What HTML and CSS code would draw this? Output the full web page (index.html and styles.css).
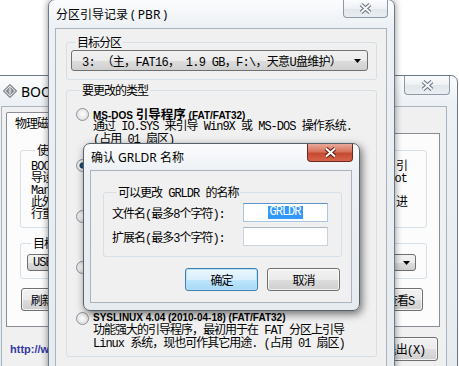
FILE: index.html
```html
<!DOCTYPE html>
<html lang="zh-CN">
<head>
    <meta charset="UTF-8">
    <meta name="viewport" content="width=device-width, initial-scale=1.0">
    <title>BOOTICE - 分区引导记录</title>
    <link rel="stylesheet" href="styles.css">
</head>
<body>
<div class="desktop">

    <!-- 主窗口 BOOTICE (在后面) -->
    <div class="win boot">
        <div class="titlebar">
            <svg class="app-icon" width="14" height="14" viewBox="0 0 14 14">
                <path d="M7 0.5L13.5 7L7 13.5L0.5 7Z" fill="#d9dcdf" stroke="#4a4f55"/>
                <path d="M3.5 7L7 3.5L10.5 7L7 10.5Z" fill="#9aa1a8" stroke="#5d646b"/>
                <path d="M7 3.5L7 10.5" stroke="#f2f2f2"/>
            </svg>
            <span class="caption">BOOTICE</span>
            <div class="close">
                <svg width="13" height="11" viewBox="0 0 13 11"><path d="M2 1.5l9 8M11 1.5l-9 8" stroke="#66717d" stroke-width="4"/><path d="M2 1.5l9 8M11 1.5l-9 8" stroke="#f5f7f9" stroke-width="2"/></svg>
            </div>
        </div>
        <div class="client">
            <div class="tabs">
                <div class="tab song">物理磁盘</div>
            </div>
            <div class="tab-panel">
                <fieldset class="group usage song">
                    <legend>使用说明</legend>
                    <div class="line"><span>BOOTICE</span><span>引</span></div>
                    <div class="line"><span>导设置</span><span>Boot</span></div>
                    <div class="line"><span>Manage</span><span></span></div>
                    <div class="line"><span>此外</span><span>进</span></div>
                    <div class="line"><span>行重建</span><span></span></div>
                </fieldset>
                <fieldset class="group target song">
                    <legend>目标磁盘</legend>
                    <div class="combo small-combo">
                        <span>USB HDD</span>
                        <svg width="7" height="4" viewBox="0 0 7 4"><path d="M0 0H7L3.5 4Z"/></svg>
                    </div>
                </fieldset>
                <div class="btn-row">
                    <button class="btn song refresh">刷新(F)</button>
                    <button class="btn song look">查看S</button>
                </div>
            </div>
            <div class="footer">
                <a class="link" href="#">http://www</a>
                <button class="btn song exit">退出(X)</button>
            </div>
        </div>
    </div>

    <!-- 分区引导记录对话框 -->
    <div class="win pbr">
        <div class="titlebar">
            <span class="caption">分区引导记录 ( PBR )</span>
            <div class="close">
                <svg width="13" height="11" viewBox="0 0 13 11"><path d="M2 1.5l9 8M11 1.5l-9 8" stroke="#66717d" stroke-width="4"/><path d="M2 1.5l9 8M11 1.5l-9 8" stroke="#f5f7f9" stroke-width="2"/></svg>
            </div>
        </div>
        <div class="client">
            <fieldset class="group part song">
                <legend>目标分区</legend>
                <div class="combo">
                    <span class="combo-text">3: （主，FAT16， 1.9 GB，F:\，天意U盘维护）</span>
                    <svg width="7" height="4" viewBox="0 0 7 4"><path d="M0 0H7L3.5 4Z"/></svg>
                </div>
            </fieldset>
            <fieldset class="group kind">
                <legend class="song">要更改的类型</legend>
                <div class="opts">
                    <div class="opt">
                        <span class="radio"></span>
                        <div class="opt-text">
                            <div class="opt-title">MS-DOS <span class="cjk">引导程序</span> (FAT/FAT32)</div>
                            <div class="song">通过 IO.SYS 来引导 Win9X 或 MS-DOS 操作系统.</div>
                            <div class="song">(占用 01 扇区)</div>
                        </div>
                    </div>
                    <div class="opt">
                        <span class="radio on"></span>
                        <div class="opt-text"><div class="opt-title"></div><div></div><div></div></div>
                    </div>
                    <div class="opt">
                        <span class="radio"></span>
                        <div class="opt-text"><div class="opt-title"></div><div></div><div></div></div>
                    </div>
                    <div class="opt">
                        <span class="radio"></span>
                        <div class="opt-text"><div class="opt-title"></div><div></div><div></div></div>
                    </div>
                    <div class="opt">
                        <span class="radio"></span>
                        <div class="opt-text">
                            <div class="opt-title">SYSLINUX 4.04 (2010-04-18) (FAT/FAT32)</div>
                            <div class="song">功能强大的引导程序，最初用于在 FAT 分区上引导</div>
                            <div class="song">Linux 系统，现也可作其它用途. (占用 01 扇区)</div>
                        </div>
                    </div>
                </div>
            </fieldset>
        </div>
    </div>

    <!-- 确认 GRLDR 名称 (当前活动窗口) -->
    <div class="win modal">
        <div class="titlebar">
            <span class="caption">确认 GRLDR 名称</span>
            <div class="close red">
                <svg width="13" height="11" viewBox="0 0 13 11"><path d="M2 1.5l9 8M11 1.5l-9 8" stroke="#5c1a10" stroke-width="4"/><path d="M2 1.5l9 8M11 1.5l-9 8" stroke="#ffffff" stroke-width="2"/></svg>
            </div>
        </div>
        <div class="client">
            <fieldset class="group names song">
                <legend>可以更改 GRLDR 的名称</legend>
                <div class="field">
                    <label>文件名(最多8个字符):</label>
                    <div class="input focus"><span class="sel">GRLDR</span></div>
                </div>
                <div class="field">
                    <label>扩展名(最多3个字符):</label>
                    <div class="input"></div>
                </div>
            </fieldset>
            <div class="dlg-buttons">
                <button class="btn song default">确定</button>
                <button class="btn song">取消</button>
            </div>
        </div>
    </div>

</div>
</body>
</html>
```

FILE: styles.css
```css
* {
    box-sizing: border-box;
}
body {
    margin: 0;
    background: #fff;
    font-family: "Noto Sans", "Noto Sans CJK SC", sans-serif;
    font-size: 12px;
    color: #000;
}
.desktop {
    position: relative;
    width: 459px;
    height: 366px;
    overflow: hidden;
}

/* 宋体风格文字 */
.song {
    font-family: "Liberation Mono", "Noto Sans CJK SC", monospace;
    font-size: 12px;
    letter-spacing: -1px;
    white-space: nowrap;
}

/* 窗口框架 */
.win {
    position: absolute;
    display: flex;
    flex-direction: column;
    border: 1px solid #6c7986;
    border-radius: 7px 7px 0 0;
    background: linear-gradient(#fbfcfd, #edf1f5 26px, #e6ebf0);
}
.titlebar {
    display: flex;
    align-items: center;
    flex: none;
}
.caption {
    white-space: nowrap;
}
.close {
    margin-left: auto;
    align-self: flex-start;
    display: flex;
    align-items: center;
    justify-content: center;
    border: 1px solid #8d99a6;
    border-top: none;
    border-radius: 0 0 4px 4px;
    background: linear-gradient(#fbfcfd, #eef1f4 50%, #e1e6eb 51%, #eaeef2);
}
.close svg {
    display: block;
}
.close.red {
    border-color: #6e2a20;
    background: linear-gradient(#e9a99b, #d7725c 45%, #c44a31 55%, #d5644a);
}
.client {
    flex: 1;
    background: #f0f0f0;
    border: 1px solid #a9b3bd;
}

/* 分组框 */
.group {
    margin: 0;
    padding: 0;
    min-width: 0;
    border: 1px solid #d5dfe5;
    border-radius: 3px;
}
.group legend {
    height: 14px;
    padding: 2px 2px 0;
    margin-left: 4px;
    line-height: 14px;
}

/* 按钮 */
.btn {
    margin: 0;
    padding: 0;
    height: 23px;
    color: #000;
    border: 1px solid #707070;
    border-radius: 3px;
    background: linear-gradient(#f2f2f2, #ebebeb 50%, #dddddd 51%, #cfcfcf);
    box-shadow: inset 0 0 0 1px rgba(255, 255, 255, 0.7);
}
.btn.default {
    border-color: #3c7fb1;
    background: linear-gradient(#eaf6fd, #d9f0fc 50%, #bee6fd 51%, #a7d9f5);
    box-shadow: inset 0 0 0 1px #b7e3fa;
}

/* 下拉框 */
.combo {
    display: flex;
    align-items: center;
    justify-content: space-between;
    height: 21px;
    padding: 0 6px 0 10px;
    border: 1px solid #707070;
    border-radius: 3px;
    background: linear-gradient(#f2f2f2, #ebebeb 50%, #dddddd 51%, #cfcfcf);
    white-space: nowrap;
    overflow: hidden;
}
.combo svg {
    flex: none;
    display: block;
}

/* ---------- BOOTICE 主窗口 ---------- */
.boot {
    z-index: 1;
    left: -8px;
    top: 75px;
    width: 466px;
    height: 300px;
}
.boot .titlebar {
    height: 30px;
    padding-left: 10px;
}
.boot .caption {
    margin-left: 4px;
    font-size: 14px;
}
.boot .close {
    width: 46px;
    height: 19px;
    margin-right: 7px;
}
.boot .client {
    margin: 0 10px 0 8px;
}
.tabs {
    display: flex;
    padding: 5px 0 0 4px;
}
.tab {
    position: relative;
    z-index: 1;
    height: 22px;
    margin-bottom: -1px;
    padding: 1px 8px 0;
    background: #fcfcfc;
    border: 1px solid #898c95;
    border-bottom: none;
    border-radius: 2px 2px 0 0;
}
.tab-panel {
    height: 194px;
    margin: 0 6px 0 4px;
    padding: 0 12px 0 13px;
    border: 1px solid #898c95;
    background: #fcfcfc;
}
.usage {
    margin-top: 9px;
    padding: 4px 19px 6px 10px;
}
.line {
    display: flex;
    justify-content: space-between;
    line-height: 12px;
    height: 12px;
}
.target {
    margin-top: 8px;
    padding: 4px 10px 7px 6px;
}
.small-combo {
    height: 17px;
    padding: 0 5px 0 5px;
}
.btn-row {
    display: flex;
    justify-content: space-between;
    margin-top: 9px;
    padding: 0 4px 0 1px;
}
.refresh {
    width: 60px;
}
.look {
    width: 46px;
}
.footer {
    display: flex;
    align-items: center;
    justify-content: space-between;
    padding: 10px 8px 0 8px;
}
.link {
    font: bold 11px "Liberation Sans", sans-serif;
    color: #3438a6;
    text-decoration: none;
}
.exit {
    width: 66px;
    height: 24px;
}

/* ---------- 分区引导记录 ---------- */
.pbr {
    z-index: 2;
    left: 48px;
    top: -1px;
    width: 347px;
    height: 380px;
    box-shadow: 0 0 7px rgba(0, 0, 0, 0.45);
}
.pbr .titlebar {
    height: 28px;
    padding-left: 7px;
}
.pbr .close {
    width: 45px;
    height: 18px;
    margin-right: 6px;
}
.pbr .client {
    margin: 0 7px 0 6px;
    padding: 6px 9px 0 10px;
}
.part {
    padding: 1px 8px 8px 4px;
}
.combo-text {
    white-space: pre;
    letter-spacing: -0.7px;
}
.kind {
    margin-top: 3px;
    height: 274px;
    padding: 10px 0 0 9px;
}
.opts {
    display: flex;
    flex-direction: column;
    gap: 12.1px;
}
.opt {
    display: flex;
    gap: 4px;
}
.opt-text {
    line-height: 13px;
}
.opt-text > div {
    height: 12.5px;
}
.opt-text > .opt-title {
    height: 14px;
    font: bold 10px/14px "Liberation Sans", sans-serif;
    white-space: nowrap;
}
.opt-title .cjk {
    font: bold 12.5px/14px "Noto Sans CJK SC", sans-serif;
}
.radio {
    flex: none;
    width: 13px;
    height: 13px;
    margin-top: 1px;
    border-radius: 50%;
    border: 1px solid #8e9297;
    background: radial-gradient(circle at 50% 45%, #ffffff, #e6e6e6 60%, #cfd1d3);
}
.radio.on {
    background: radial-gradient(circle, #2a6a9e 0, #14385c 2.5px, transparent 3.5px),
        radial-gradient(circle at 50% 45%, #ffffff, #e6e6e6 60%, #cfd1d3);
}

/* ---------- 确认 GRLDR 名称 ---------- */
.modal {
    z-index: 3;
    left: 83px;
    top: 143px;
    width: 277px;
    height: 168px;
    border-color: #56616d;
    border-radius: 7px;
    box-shadow: 2px 3px 9px rgba(0, 0, 0, 0.55);
}
.modal .titlebar {
    height: 26px;
    padding-left: 7px;
}
.modal .close {
    width: 46px;
    height: 18px;
    margin-right: 6px;
}
.modal .client {
    margin: 0 7px 7px 6px;
}
.names {
    margin: 14px 9px 0 12px;
    padding: 4px 0 10px 8px;
}
.field {
    display: flex;
    align-items: center;
    height: 19px;
}
.field + .field {
    margin-top: 5px;
}
.field label {
    width: 131px;
}
.input {
    display: flex;
    align-items: center;
    justify-content: center;
    width: 85px;
    height: 19px;
    background: #fff;
    border: 1px solid #c9d4de;
    border-top-color: #abb6c2;
}
.input.focus {
    border-color: #a9c7e2;
    border-top-color: #5e94c4;
}
.sel {
    background: #3399ff;
    color: #fff;
    padding: 0 2px 0 1px;
    line-height: 13px;
}
.dlg-buttons {
    display: flex;
    justify-content: flex-end;
    gap: 9px;
    margin-top: 11px;
    padding-right: 11px;
}
.dlg-buttons .btn {
    width: 73px;
}
```
